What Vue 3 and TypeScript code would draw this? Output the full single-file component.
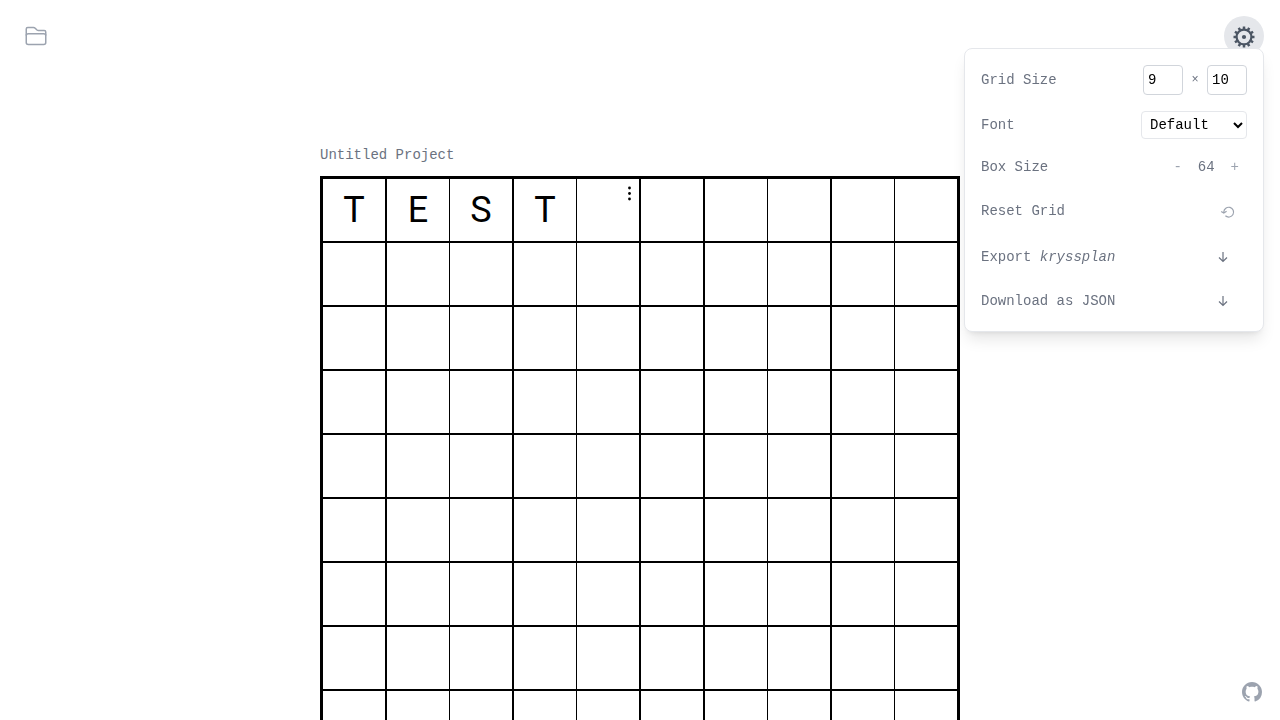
<script setup lang="ts">
import { ref, computed } from 'vue'

const rows = ref<number>(9)
const cols = ref<number>(10)
const boxSize = ref<number>(64)
const font = ref<string>('Default')
const panelOpen = ref<boolean>(true)
const letters = ref<string[]>(['T', 'E', 'S', 'T'])
const activeCell = 4
const thinColumns = [1, 3, 6, 8]
const teeth = Array.from({ length: 12 }, (_, i) => i * 30)

const gridStyle = computed(() => ({
  gridTemplateColumns: `repeat(${cols.value}, auto)`,
  gridAutoRows: `${boxSize.value}px`,
}))
const cellStyle = computed(() => ({ width: `${boxSize.value - 2}px` }))
const cellCount = computed(() => rows.value * cols.value)

function cellClass(index: number) {
  const col = index % cols.value
  return {
    thin: thinColumns.includes(col),
    last: col === cols.value - 1,
    bottom: index >= cellCount.value - cols.value,
  }
}

function resetGrid() {
  letters.value = []
}
</script>

<template>
  <div class="page">
    <header class="topbar">
      <button class="round" type="button" aria-label="Projects">
        <svg width="24" height="24" viewBox="0 0 24 24" fill="none" stroke="currentColor" stroke-width="1.5" stroke-linejoin="round">
          <path d="M2.250 18.500V5Q2.250 3.500 3.750 3.500H9.500Q10.500 3.500 11.200 4.200L13 6Q13.600 6.500 14.400 6.500H20.250Q21.750 6.500 21.750 8V18.500Q21.750 20.500 19.750 20.500H4.250Q2.250 20.500 2.250 18.500Z" />
          <path d="M2.250 11.500Q2.250 9.800 4.250 9.800H19.750Q21.750 9.800 21.750 11.500" />
        </svg>
      </button>
      <div class="settings">
        <button class="round on" type="button" aria-label="Settings" @click="panelOpen = !panelOpen">
          <svg width="24" height="24" viewBox="-12 -13 24 24" fill="none" stroke="currentColor">
            <circle r="7.400" stroke-width="2.200" />
            <path v-for="a in teeth" :key="a" d="M0 -7.800V-10.500" stroke-width="2.500" :transform="`rotate(${a})`" />
            <circle r="2.100" fill="currentColor" stroke="none" />
          </svg>
        </button>
        <section v-if="panelOpen" class="panel">
          <div class="row tall">
            <label for="rows">Grid Size</label>
            <div class="pair">
              <input id="rows" v-model.number="rows" class="num" type="text" />
              <span class="times">×</span>
              <input v-model.number="cols" class="num" type="text" aria-label="Columns" />
            </div>
          </div>
          <div class="row">
            <label for="font">Font</label>
            <select id="font" v-model="font" class="select">
              <option>Default</option>
              <option>Serif</option>
            </select>
          </div>
          <div class="row short">
            <span>Box Size</span>
            <div class="pair">
              <button class="step" type="button" aria-label="Smaller boxes" @click="boxSize -= 4">-</button>
              <span>{{ boxSize }}</span>
              <button class="step" type="button" aria-label="Larger boxes" @click="boxSize += 4">+</button>
            </div>
          </div>
          <div class="row reset">
            <span>Reset Grid</span>
            <button class="action light" type="button" aria-label="Reset grid" @click="resetGrid">
              <svg width="16" height="16" viewBox="0 0 16 16" fill="none" stroke="currentColor" stroke-width="1.200">
                <path d="M3.800 9V8A4.900 4.900 0 1 1 5.400 11.800" />
                <path d="M1.200 7.400L3.800 9L6.600 7.200" />
              </svg>
            </button>
          </div>
          <div class="row">
            <span>Export <em>kryssplan</em></span>
            <button class="action" type="button" aria-label="Export kryssplan">
              <svg width="16" height="16" viewBox="0 0 16 16" fill="none" stroke="currentColor" stroke-width="1.200">
                <path d="M8 3V12.500M4 8.500L8 12.500L12 8.500" />
              </svg>
            </button>
          </div>
          <div class="row">
            <span>Download as JSON</span>
            <button class="action" type="button" aria-label="Download as JSON">
              <svg width="16" height="16" viewBox="0 0 16 16" fill="none" stroke="currentColor" stroke-width="1.200">
                <path d="M8 3V12.500M4 8.500L8 12.500L12 8.500" />
              </svg>
            </button>
          </div>
        </section>
      </div>
    </header>

    <main class="main">
      <div class="project">
        <h1 class="title">Untitled Project</h1>
        <div class="grid" :style="gridStyle">
          <div v-for="(_, i) in cellCount" :key="i" class="cell" :class="cellClass(i)" :style="cellStyle">
            {{ letters[i] }}
            <button v-if="i === activeCell" class="menu" type="button" aria-label="Cell options">
              <svg width="4" height="16" viewBox="0 0 4 16" fill="currentColor">
                <circle cx="1.500" cy="2" r="1.400" />
                <circle cx="1.500" cy="7.500" r="1.400" />
                <circle cx="1.500" cy="13" r="1.400" />
              </svg>
            </button>
          </div>
        </div>
      </div>
    </main>

    <a class="github" href="#" aria-label="GitHub">
      <svg width="20" height="20" viewBox="0 0 16 16" fill="currentColor">
        <path d="M8 0C3.580 0 0 3.580 0 8c0 3.540 2.290 6.530 5.470 7.590.4.070.55-.17.55-.38 0-.19-.01-.82-.01-1.490-2.010.37-2.530-.49-2.690-.94-.09-.23-.48-.94-.82-1.130-.28-.15-.68-.52-.01-.53.63-.01 1.080.58 1.230.82.72 1.210 1.870.87 2.330.66.07-.52.28-.87.51-1.070-1.780-.2-3.640-.89-3.640-3.950 0-.87.31-1.590.82-2.150-.08-.2-.36-1.020.08-2.120 0 0 .67-.21 2.200.82.64-.18 1.320-.27 2-.27s1.360.09 2 .27c1.530-1.040 2.200-.82 2.200-.82.44 1.100.16 1.920.08 2.120.51.56.82 1.270.82 2.150 0 3.070-1.870 3.750-3.650 3.950.29.25.54.73.54 1.480v2.200c0 .21.15.46.55.38A8.010 8.010 0 0 0 16 8c0-4.420-3.580-8-8-8Z" />
      </svg>
    </a>
  </div>
</template>

<style>
body {
  margin: 0;
  background: #fff;
}
</style>

<style scoped>
.page {
  min-height: 100vh;
  box-sizing: border-box;
  padding-top: 145px;
  font-family: "Liberation Mono", monospace;
  font-size: 14px;
  line-height: 20px;
  color: #6b7280;
}
button {
  display: flex;
  align-items: center;
  justify-content: center;
  border: 0;
  padding: 0;
  background: none;
  color: inherit;
  font: inherit;
  cursor: pointer;
}
.topbar {
  position: fixed;
  z-index: 2;
  top: 0;
  left: 0;
  right: 0;
  display: flex;
  justify-content: space-between;
  padding: 16px;
}
.round {
  width: 40px;
  height: 40px;
  border-radius: 50%;
  color: #9ca3af;
}
.round.on {
  background: #e5e7eb;
  color: #4b5563;
}
.settings {
  position: relative;
}
.panel {
  position: absolute;
  top: 32px;
  right: 0;
  width: 300px;
  box-sizing: border-box;
  display: flex;
  flex-direction: column;
  gap: 16px;
  padding: 16px;
  border: 1px solid #e5e7eb;
  border-radius: 8px;
  background: #fff;
  box-shadow: 0 10px 15px -3px rgba(0, 0, 0, 0.1), 0 4px 6px -4px rgba(0, 0, 0, 0.1);
}
.row {
  display: flex;
  align-items: center;
  justify-content: space-between;
  min-height: 28px;
}
.row.tall {
  min-height: 30px;
}
.row.short {
  min-height: 24px;
}
.row.reset {
  min-height: 32px;
}
.pair {
  display: flex;
  align-items: center;
  gap: 8px;
}
.num {
  width: 40px;
  height: 30px;
  box-sizing: border-box;
  padding: 4px;
  border: 1px solid #d1d5db;
  border-radius: 4px;
  background: #fff;
  color: #000;
  font: inherit;
}
.times {
  width: 8px;
  font-size: 12px;
  text-align: center;
}
.select {
  width: 106px;
  height: 28px;
  padding: 0 4px;
  border: 1px solid #e5e7eb;
  border-radius: 4px;
  background: #fff;
  color: #000;
  font: inherit;
}
.step {
  padding: 0 8px;
  color: #9ca3af;
}
.action {
  padding: 0 16px;
}
.action.light {
  padding: 2px 11px 0;
  color: #9ca3af;
}
.main {
  display: flex;
  justify-content: center;
}
.title {
  margin: 0 0 11px;
  font-size: 14px;
  font-weight: 400;
  line-height: 20px;
}
.grid {
  display: grid;
  border: 3px solid #000;
}
.cell {
  position: relative;
  display: flex;
  align-items: center;
  justify-content: center;
  border-right: 2px solid #000;
  border-bottom: 2px solid #000;
  color: #000;
  font-family: Roboto, sans-serif;
  font-size: 36px;
  line-height: 40px;
}
.cell.thin {
  border-right-width: 1px;
}
.cell.last {
  border-right-width: 0;
}
.cell.bottom {
  border-bottom-width: 0;
}
.menu {
  position: absolute;
  top: 7px;
  right: 7px;
}
.github {
  position: fixed;
  right: 18px;
  bottom: 18px;
  display: flex;
  color: #9ca3af;
}
</style>
